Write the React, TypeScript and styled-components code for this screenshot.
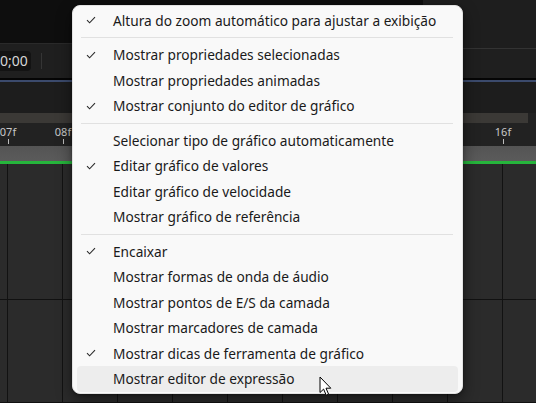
import React from "react";
import styled, { createGlobalStyle } from "styled-components";

const Global = createGlobalStyle`
  html, body { margin: 0; padding: 0; background: #2a2a2a; overflow: hidden; }
  #root { width: 536px; height: 403px; }
`;

const Page = styled.div`
  position: relative;
  width: 536px;
  height: 403px;
  overflow: hidden;
  display: flex;
  flex-direction: column;
  background: #2a2a2a;
  font-family: "Noto Sans", "Open Sans", sans-serif;
`;

const Upper = styled.div`
  display: flex;
  height: 78px;
  flex: 0 0 auto;
`;

const Column = styled.div<{ $w?: number }>`
  display: flex;
  flex-direction: column;
  flex: ${(p) => (p.$w ? `0 0 ${p.$w}px` : "1 1 auto")};
`;

const Head = styled.div<{ $h: number; $bg: string; $line: string }>`
  height: ${(p) => p.$h}px;
  background: ${(p) => p.$bg};
  border-bottom: 1px solid ${(p) => p.$line};
  flex: 0 0 auto;
`;

const Toolbar = styled.div`
  flex: 1 1 auto;
  background: #1f1f1f;
  display: flex;
  align-items: center;
  gap: 10px;
`;

const TimeField = styled.div`
  margin-left: -6px;
  height: 20px;
  padding: 0 3px 0 6px;
  border-radius: 4px;
  background: #131313;
  color: #d6d6d6;
  font-family: "Noto Sans", sans-serif;
  font-size: 14px;
  line-height: 20px;
  display: flex;
  align-items: center;
`;

const VSep = styled.div`
  width: 1px;
  height: 16px;
  background: #353535;
`;

const Rule = styled.div<{ $h: number; $c: string }>`
  height: ${(p) => p.$h}px;
  background: ${(p) => p.$c};
  flex: 0 0 auto;
`;

const Panel = styled.div`
  height: 31px;
  background: #1d1d1d;
  flex: 0 0 auto;
`;

const BandRow = styled.div`
  height: 10px;
  background: #222;
  display: flex;
  flex: 0 0 auto;
`;

const Band = styled.div`
  width: 528px;
  background: #3b3936;
`;

const Ruler = styled.div`
  height: 23px;
  background: #222222;
  display: flex;
  padding-left: 8px;
  flex: 0 0 auto;
`;

const Tick = styled.div`
  position: relative;
  width: 55px;
  flex: 0 0 55px;
`;

const TickLabel = styled.span`
  position: absolute;
  left: 0;
  top: 2px;
  transform: translateX(-50%);
  color: #c9c9c9;
  font-family: "Noto Sans", sans-serif;
  font-size: 11px;
  line-height: 13px;
`;

const TickMark = styled.span`
  position: absolute;
  left: 0;
  top: 16px;
  width: 1px;
  height: 5px;
  background: #bdbdbd;
`;

const GreyBar = styled.div`
  height: 15px;
  background: linear-gradient(#545454, #5b5b5b);
  flex: 0 0 auto;
`;

const Green = styled.div`
  height: 3px;
  background: #26b53c;
  flex: 0 0 auto;
`;

const Grid = styled.div`
  flex: 1 1 auto;
  display: flex;
  flex-direction: column;
  background: #2b2b2b;
`;

const GridRow = styled.div<{ $h?: number }>`
  display: flex;
  padding-left: 7px;
  ${(p) => (p.$h ? `height: ${p.$h}px; flex: 0 0 auto;` : "flex: 1 1 auto;")}
  border-bottom: 1px solid #111;
`;

const GridCell = styled.div`
  flex: 0 0 55px;
  border-left: 1px solid #121212;
  box-sizing: border-box;
`;

const Menu = styled.div`
  position: absolute;
  left: 72px;
  top: 5px;
  width: 391px;
  box-sizing: border-box;
  padding: 1.5px 0 1.5px;
  background: #f9f9f9;
  border: 1px solid #e2e2e2;
  border-radius: 8px;
  box-shadow: 0 6px 16px rgba(0, 0, 0, 0.45), 0 1px 3px rgba(0, 0, 0, 0.3);
  display: flex;
  flex-direction: column;
`;

const Item = styled.div<{ $hover?: boolean }>`
  height: 25.5px;
  margin: 0 4px;
  padding-left: 36px;
  border-radius: 4px;
  position: relative;
  display: flex;
  align-items: center;
  background: ${(p) => (p.$hover ? "#ededed" : "transparent")};
  color: #1a1a1a;
  font-family: "Noto Sans", "Open Sans", sans-serif;
  font-size: 13.7px;
  white-space: nowrap;
`;

const Check = styled.svg`
  position: absolute;
  left: 9px;
  top: 50%;
  margin-top: -4px;
`;

const Separator = styled.div`
  height: 1px;
  margin: 4px 9px 4px 8px;
  background: #e1e1e1;
`;

const Cursor = styled.svg`
  position: absolute;
  left: 319px;
  top: 376px;
`;

type Entry = { label: string; checked?: boolean; hover?: boolean } | "sep";

const entries: Entry[] = [
  { label: "Altura do zoom automático para ajustar a exibição", checked: true },
  "sep",
  { label: "Mostrar propriedades selecionadas", checked: true },
  { label: "Mostrar propriedades animadas" },
  { label: "Mostrar conjunto do editor de gráfico", checked: true },
  "sep",
  { label: "Selecionar tipo de gráfico automaticamente" },
  { label: "Editar gráfico de valores", checked: true },
  { label: "Editar gráfico de velocidade" },
  { label: "Mostrar gráfico de referência" },
  "sep",
  { label: "Encaixar", checked: true },
  { label: "Mostrar formas de onda de áudio" },
  { label: "Mostrar pontos de E/S da camada" },
  { label: "Mostrar marcadores de camada" },
  { label: "Mostrar dicas de ferramenta de gráfico", checked: true },
  { label: "Mostrar editor de expressão", hover: true },
];

// Only the frame labels left visible beside the menu are written out.
const frames = ["07f", "08f", "", "", "", "", "", "", "", "16f"];
const cells = Array.from({ length: 10 }, (_, i) => i);

export default function App() {
  return (
    <Page>
      <Global />
      <Upper>
        <Column $w={423}>
          <Head $h={43} $bg="#0e0e0e" $line="#2a2a2a" />
          <Toolbar>
            <TimeField>0;00</TimeField>
            <VSep />
          </Toolbar>
        </Column>
        <Column>
          <Head $h={48} $bg="#1e1e1e" $line="#333" />
          <Toolbar />
        </Column>
      </Upper>
      <Rule $h={2} $c="#050505" />
      <Rule $h={2} $c="#3b4a6c" />
      <Panel />
      <BandRow>
        <Band />
      </BandRow>
      <Ruler>
        {frames.map((f, i) => (
          <Tick key={i}>
            {f && <TickLabel>{f}</TickLabel>}
            <TickMark />
          </Tick>
        ))}
      </Ruler>
      <GreyBar />
      <Green />
      <Grid>
        <GridRow $h={135}>
          {cells.map((c) => (
            <GridCell key={c} />
          ))}
        </GridRow>
        <GridRow>
          {cells.map((c) => (
            <GridCell key={c} />
          ))}
        </GridRow>
      </Grid>

      <Menu>
        {entries.map((e, i) =>
          e === "sep" ? (
            <Separator key={i} />
          ) : (
            <Item key={i} $hover={e.hover}>
              {e.checked && (
                <Check width="10" height="8" viewBox="0 0 10 8">
                  <path d="M1 4.2 L3.6 6.8 L9 1.2" fill="none" stroke="#2b2b2b" strokeWidth="1.1" />
                </Check>
              )}
              {e.label}
            </Item>
          )
        )}
      </Menu>

      <Cursor width="14" height="21" viewBox="0 0 14 21">
        <path
          d="M1 1 L1 16.5 L4.6 13.1 L7.2 19.2 L9.6 18.2 L7 12.2 L11.8 12.2 Z"
          fill="#ffffff"
          stroke="#000000"
          strokeWidth="1"
          strokeLinejoin="round"
        />
      </Cursor>
    </Page>
  );
}
